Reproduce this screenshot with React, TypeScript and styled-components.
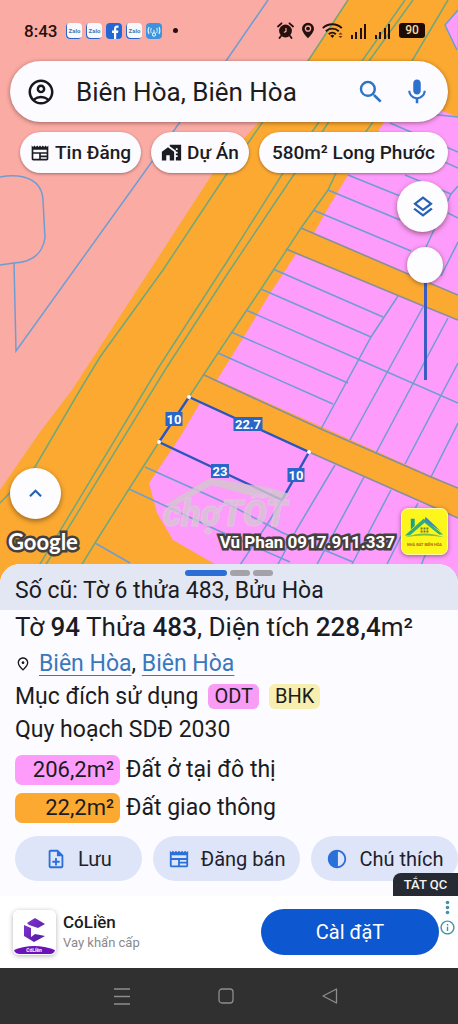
import React from "react";
import styled, { createGlobalStyle } from "styled-components";
import {
  MdContrast,
  MdHomeWork,
  MdInfoOutline,
  MdKeyboardArrowUp,
  MdMic,
  MdOutlineAccountCircle,
  MdOutlineLayers,
  MdOutlineNewspaper,
  MdOutlineNoteAdd,
  MdOutlinePlace,
  MdSearch,
} from "react-icons/md";

const GlobalStyle = createGlobalStyle`
  *, *::before, *::after { box-sizing: border-box; }
  body { margin: 0; font-family: Roboto, "Noto Sans", sans-serif; color: #1b1c22; background: #fcfbff; }
  button, input { font: inherit; color: inherit; border: 0; background: none; margin: 0; padding: 0; }
  button { cursor: pointer; }
  svg { display: block; flex: none; }
`;

const Page = styled.div`
  display: flex;
  flex-direction: column;
  min-height: 100vh;
  overflow: hidden;
`;

/* ---------- Map ---------- */

const MapArea = styled.section`
  position: relative;
  isolation: isolate;
  flex: 1;
  display: flex;
  flex-direction: column;
  background: #fba930;
`;

const MapCanvas = styled.svg`
  position: absolute;
  inset: 0;
  width: 100%;
  height: 100%;
  z-index: -1;
`;

const StatusBar = styled.header`
  display: flex;
  align-items: center;
  justify-content: space-between;
  height: 61px;
  padding: 0 33px 0 24px;
  font-size: 17px;
  font-weight: 500;
  color: #26100d;
`;

const StatusGroup = styled.div<{ $gap: number }>`
  display: flex;
  align-items: center;
  gap: ${(p) => p.$gap}px;
`;

const Clock = styled.time`
  margin-right: 5px;
`;

const AppBadge = styled.span<{ $bg: string; $fg: string }>`
  display: grid;
  place-items: center;
  width: 16px;
  height: 16px;
  border-radius: 4px;
  background: ${(p) => p.$bg};
  color: ${(p) => p.$fg};
  font-size: 6px;
  font-weight: 700;
  overflow: hidden;
`;

const ZaloBadge = styled(AppBadge)`
  box-shadow: inset 1px -1px 0 0 #2f62c4;
`;

const MoreDot = styled.span`
  width: 5px;
  height: 5px;
  margin-left: 7px;
  border-radius: 50%;
  background: #26100d;
`;

const Battery = styled.span`
  width: 26px;
  margin-left: 1px;
  border-radius: 3px;
  background: #1d0b04;
  color: #fdd9a0;
  font-size: 12px;
  line-height: 15px;
  text-align: center;
`;

const SearchBar = styled.form`
  display: flex;
  align-items: center;
  height: 61px;
  margin: 0 10px;
  padding: 0 16px;
  border-radius: 31px;
  background: #fcfbff;
  box-shadow: 0 1px 4px rgba(60, 30, 20, 0.5);
`;

const SearchInput = styled.input`
  flex: 1;
  min-width: 0;
  margin: 0 20px 0 20px;
  font-size: 26px;
  outline: none;
`;

const IconButton = styled.button<{ $color: string; $left?: number }>`
  color: ${(p) => p.$color};
  margin-left: ${(p) => p.$left ?? 0}px;
`;

const Chips = styled.nav`
  display: flex;
  gap: 10px;
  padding: 10px 10px 4px 20px;
  overflow: hidden;
`;

const Chip = styled.button<{ $grow?: boolean }>`
  display: flex;
  align-items: center;
  justify-content: center;
  flex: ${(p) => (p.$grow ? "1 0 auto" : "none")};
  gap: 5px;
  height: 41px;
  padding: 0 10px;
  border-radius: 21px;
  background: #fcfbff;
  box-shadow: 0 1px 3px rgba(60, 30, 20, 0.45);
  font-size: 19px;
  font-weight: 500;
  white-space: nowrap;
`;

const MapControls = styled.div`
  display: flex;
  flex-direction: column;
  align-items: flex-end;
  gap: 15px;
  padding: 4px 10px 0;
`;

const RoundButton = styled.button`
  display: grid;
  place-items: center;
  width: 51px;
  height: 51px;
  border-radius: 50%;
  background: #fdfcff;
  color: #2461b5;
  box-shadow: 0 2px 5px rgba(60, 30, 20, 0.5);
`;

const OpacitySlider = styled.input`
  appearance: none;
  writing-mode: vertical-lr;
  direction: rtl;
  width: 36px;
  height: 133px;
  margin-right: 5px;
  background: linear-gradient(#3a5cc0, #3a5cc0) center / 3px 100% no-repeat;

  &::-webkit-slider-thumb {
    appearance: none;
    width: 36px;
    height: 36px;
    border-radius: 50%;
    background: #fdfcff;
    box-shadow: 0 1px 4px rgba(60, 30, 20, 0.5);
  }
`;

const MapFooter = styled.div`
  display: flex;
  align-items: flex-end;
  justify-content: space-between;
  margin-top: auto;
  padding: 0 10px 29px 8px;
`;

const MapFooterLeft = styled.div`
  display: flex;
  flex-direction: column;
  gap: 10px;
`;

const MapFooterRight = styled.div`
  display: flex;
  align-items: flex-end;
  gap: 6px;
`;

const Outlined = styled.span<{ $size: number }>`
  font-size: ${(p) => p.$size}px;
  font-weight: 700;
  line-height: 26px;
  color: #fff;
  -webkit-text-stroke: 5px #454040;
  paint-order: stroke fill;
  white-space: nowrap;
`;

const MapBrand = styled(Outlined)`
  font-family: Lato, Roboto, sans-serif;
`;

const ExpandButton = styled(RoundButton)`
  margin-left: 2px;
`;

const AgencyLogo = styled.svg`
  width: 47px;
  height: 47px;
  border-radius: 7px;
  background: #fdf61c;
  border: 1px solid #fdf8b0;
  box-shadow: 0 1px 4px rgba(60, 30, 20, 0.5);
`;

/* ---------- Parcel sheet ---------- */

const Sheet = styled.main`
  position: relative;
  margin-top: -20px;
  border-radius: 20px 20px 0 0;
  background: #fcfbff;
  overflow: hidden;
`;

const SheetHead = styled.div`
  height: 46px;
  padding: 6px 15px 0;
  background: #e3e7f3;
`;

const PageMarks = styled.div`
  display: flex;
  justify-content: center;
  gap: 3px;
  height: 6px;
`;

const PageMark = styled.span<{ $active?: boolean }>`
  width: ${(p) => (p.$active ? 42 : 20)}px;
  border-radius: 4px;
  background: ${(p) => (p.$active ? "#2b6fd6" : "#a3a2a9")};
`;

const Line = styled.p`
  display: flex;
  align-items: center;
  margin: 0;
  height: 33px;
  font-size: 23px;
  line-height: 28px;
  white-space: pre;
`;

const OldNumber = styled(Line)`
  height: 30px;
`;

const SheetBody = styled.div`
  padding: 0 15px;
`;

const Title = styled.h1`
  margin: 0;
  padding-bottom: 2px;
  font-size: 26px;
  font-weight: 400;
  line-height: 35px;
  white-space: nowrap;

  b {
    font-weight: 500;
  }
`;

const Place = styled(Line)`
  gap: 8px;

  a {
    color: #3a78bd;
    text-decoration-thickness: 1px;
    text-underline-offset: 4px;
  }
`;

const Tag = styled.span<{ $bg: string }>`
  margin-left: 10px;
  padding: 0 6px;
  border-radius: 6px;
  background: ${(p) => p.$bg};
  font-size: 20px;
  line-height: 25px;
`;

const LandUses = styled.ul`
  display: grid;
  gap: 8px;
  margin: 9px 0 0;
  padding: 0;
  list-style: none;
`;

const LandUse = styled.li`
  display: flex;
  align-items: center;
  gap: 6px;
  font-size: 23px;
  line-height: 30px;
`;

const Area = styled.span<{ $bg: string }>`
  width: 105px;
  padding-right: 6px;
  border-radius: 7px;
  background: ${(p) => p.$bg};
  font-size: 22px;
  text-align: right;
`;

const Actions = styled.div`
  display: flex;
  gap: 11px;
  margin-right: -40px;
  padding: 13px 0 15px;
`;

const Action = styled.button<{ $pad: number }>`
  display: flex;
  align-items: center;
  justify-content: center;
  flex: none;
  gap: 11px;
  height: 45px;
  padding: 0 ${(p) => p.$pad}px;
  border-radius: 23px;
  background: #dfe5f8;
  color: #1c222c;
  font-size: 20px;
  white-space: nowrap;

  svg {
    color: #2b70d9;
  }
`;

const AdToggle = styled.button`
  position: absolute;
  right: 0;
  bottom: 0;
  width: 65px;
  height: 23px;
  border-radius: 8px 0 0 0;
  background: #252a33;
  color: #f3f3f5;
  font-size: 13px;
  font-weight: 500;
`;

/* ---------- Ad and system bar ---------- */

const Ad = styled.aside`
  display: flex;
  align-items: center;
  height: 72px;
  padding: 0 2px 0 13px;
  background: #fff;
`;

const AdIcon = styled.svg`
  width: 43px;
  height: 45px;
  border-radius: 6px;
  box-shadow: 0 1px 5px rgba(0, 0, 0, 0.3);
`;

const AdText = styled.div`
  flex: 1;
  margin-left: 7px;
`;

const AdName = styled.div`
  font-size: 17px;
  font-weight: 500;
  line-height: 22px;
`;

const AdNote = styled.div`
  color: #8a8a8e;
  font-size: 13px;
  line-height: 20px;
`;

const AdButton = styled.button`
  width: 178px;
  height: 46px;
  border-radius: 23px;
  background: #0d57d0;
  color: #fff;
  font-size: 20px;
`;

const AdOptions = styled.div`
  display: flex;
  flex-direction: column;
  align-items: center;
  align-self: flex-start;
  gap: 4px;
  padding-top: 4px;
  color: #3f93a5;
`;

const SystemBar = styled.footer`
  display: flex;
  justify-content: center;
  align-items: center;
  gap: 80px;
  height: 56px;
  padding-right: 6px;
  background: #303030;

  button {
    display: grid;
    place-items: center;
    width: 24px;
    height: 24px;
  }
`;

/* ---------- Map data ---------- */

const mainRoadLines = [
  "348,0 308,61 262,123 228,172 163,270 100,357 80,390 35,467 0,503",
  "405,0 362,61 283,173 228,260 157,370 28,584",
  "413,0 369,61 295,173 228,273 165,370 34,584",
  "448,0 412,61 378,115 336,173 328,190 301,228 261,289 218,353 189,397 159,442 129,489 95,543 70,584",
];

const parcelLines = [
  "14,263 16,351 146,170 180,122 226,61 268,0",
  "458,10 445,25 457,50",
  "391,110 458,117",
  "390,123 458,152",
  "377,132 458,168",
  "348,175 400,196",
  "405,175 451,194 458,186",
  "328,190 400,220",
  "313,210 411,251",
  "451,194 426,247",
  "448,213 458,218",
  "458,242 441,276",
  "273,269 383,317",
  "261,289 371,337",
  "246,310 360,360 458,403",
  "231,332 348,383",
  "218,353 333,404",
  "398,296 371,337 321,429",
  "423,307 350,440",
  "448,318 376,453",
  "458,363 405,464",
  "458,423 431,477",
  "145,467 230,505 283,533 353,562",
  "129,489 217,530 290,562",
  "95,543 130,563",
  "282,500 268,523 238,568",
  "335,465 298,527 276,568",
  "364,477 315,568",
  "391,490 350,568",
  "418,503 385,568",
  "442,513 420,568",
];

const roadEdges = [
  "301,228 408,274 458,295",
  "286,249 421,305 458,320",
  "204,375 321,429 431,477 458,488",
  "189,397 309,452 458,518",
];

const corners = [
  [189, 397],
  [309, 452],
  [159, 442],
];

const edgeLabels = [
  { x: 174, y: 419, w: 17, text: "10" },
  { x: 248, y: 424, w: 29, text: "22.7" },
  { x: 220, y: 471, w: 18, text: "23" },
  { x: 296, y: 475, w: 17, text: "10" },
];

function ParcelMap() {
  return (
    <MapCanvas viewBox="0 0 458 584" preserveAspectRatio="xMidYMin slice" aria-hidden="true">
      <rect width="458" height="584" fill="#fba930" />
      <polygon points="0,0 347,0 307,61 258,123 213,173 150,270 72,390 40,432 0,490" fill="#faaba4" />
      <g fill="#fd9cfb">
        <polygon points="458,10 445,25 457,50" />
        <polygon points="391,110 440,110 458,117 458,295 314,233 328,208 348,175 381,127" />
        <polygon points="296,254 458,320 458,488 217,380 248,330 271,292" />
        <polygon points="200,403 309,452 458,518 458,584 250,584 213,563 173,540 157,513 149,483 180,437" />
      </g>
      <g fill="none" stroke="#6fa77f" strokeWidth="1.5">
        {mainRoadLines.map((points) => (
          <polyline key={points} points={points} />
        ))}
      </g>
      <g fill="none" stroke="#6e9dd4" strokeWidth="1.5">
        <path d="M0 177Q10 175 18 176Q42 179 43 200L45 238Q41 262 14 263L0 265" />
        {parcelLines.map((points) => (
          <polyline key={points} points={points} />
        ))}
      </g>
      <g fill="none" stroke="#8a8f9c" strokeWidth="1.6">
        {roadEdges.map((points) => (
          <polyline key={points} points={points} />
        ))}
      </g>
      <polygon points="189,397 309,452 282,500 159,442" fill="none" stroke="#2a56bd" strokeWidth="2.4" />
      {corners.map(([x, y]) => (
        <circle key={x} cx={x} cy={y} r="2" fill="#fff" />
      ))}
      <g fill="#d3c8cf" opacity="0.8">
        <path d="M165 505 L210 478 L270 488 L290 494 L284 501 L248 495 L212 485 L176 505Z" />
        <text x="163" y="526" fontSize="36" fontWeight="900" fontStyle="italic" stroke="#e6c6e8" strokeWidth="1">
          chợTỐT
        </text>
      </g>
      {edgeLabels.map(({ x, y, w, text }) => (
        <g key={`${x}-${y}`}>
          <rect x={x - w / 2} y={y - 7} width={w} height="14" fill="#2a66c8" />
          <text x={x} y={y + 5} fill="#fff" fontSize="13" fontWeight="700" textAnchor="middle">
            {text}
          </text>
        </g>
      ))}
    </MapCanvas>
  );
}

const AlarmIcon = () => (
  <svg width="17" height="17" viewBox="0 0 17 17">
    <circle cx="8.500" cy="9" r="6.400" fill="#26100d" />
    <path d="M1 4.500 4.500 1.300M16 4.500 12.500 1.300M4 14l-1.500 2M13 14l1.500 2" stroke="#26100d" strokeWidth="1.800" strokeLinecap="round" />
    <path d="M9 6v3.300L7 10.500" fill="none" stroke="#faaba4" strokeWidth="1.200" />
  </svg>
);

const PinIcon = () => (
  <svg width="14" height="17" viewBox="0 0 14 17">
    <path d="M7 .8a6 6 0 0 0-6 6C1 10.500 7 16.300 7 16.300s6-5.800 6-9.500a6 6 0 0 0-6-6Z" fill="#26100d" />
    <circle cx="7" cy="6.600" r="2.600" fill="none" stroke="#faaba4" strokeWidth="1.300" />
  </svg>
);

const WifiIcon = () => (
  <svg width="21" height="16" viewBox="0 0 21 16" fill="none" stroke="#26100d" strokeWidth="1.900">
    <path d="M.8 5.200a13.500 13.500 0 0 1 19 0M3.800 8.300a9.300 9.300 0 0 1 13 0M6.800 11.200a5 5 0 0 1 7 0" />
    <path d="m8.300 12.700 2 2.300 2-2.300a3 3 0 0 0-4 0Z" fill="#26100d" stroke="none" />
    <path d="m16.500 11.500 2-2 2 2ZM16.500 13l2 2 2-2Z" fill="#6b2c14" stroke="none" />
  </svg>
);

const SignalIcon = () => (
  <svg width="17" height="16" viewBox="0 0 17 16" stroke="#26100d" strokeWidth="2">
    <path d="M2 16v-4M6 16V9M11 16V5M15 16V1" />
  </svg>
);

export default function App() {
  return (
    <>
      <GlobalStyle />
      <Page>
        <MapArea>
          <ParcelMap />
          <StatusBar>
            <StatusGroup $gap={4}>
              <Clock>8:43</Clock>
              <ZaloBadge $bg="#f7fafc" $fg="#3c7fb8">Zalo</ZaloBadge>
              <ZaloBadge $bg="#f7fafc" $fg="#3c7fb8">Zalo</ZaloBadge>
              <AppBadge $bg="#2467d4" $fg="#fff">
                <svg width="16" height="16" viewBox="0 0 16 16">
                  <path d="M8 16v-6H6V7.500h2V6c0-2.300 1.200-3.400 3.200-3.400h1.300v2.200h-1.200c-.8 0-1.100.4-1.100 1.200v1.500h2.200L12 10h-1.800v6Z" fill="#fff" />
                </svg>
              </AppBadge>
              <ZaloBadge $bg="#f7fafc" $fg="#3c7fb8">Zalo</ZaloBadge>
              <AppBadge $bg="#3d93dc" $fg="#fff">
                <svg width="16" height="16" viewBox="0 0 16 16" fill="none" stroke="#d9f1ff" strokeWidth="1.100">
                  <path d="M3 4q-1.800 3.500 0 7M5.300 5q-1.200 2.500 0 5M13 4q1.800 3.500 0 7M10.700 5q1.200 2.500 0 5M8 7v3" />
                  <circle cx="8" cy="11.500" r="1.600" />
                </svg>
              </AppBadge>
              <MoreDot />
            </StatusGroup>
            <StatusGroup $gap={7}>
              <AlarmIcon />
              <PinIcon />
              <WifiIcon />
              <SignalIcon />
              <SignalIcon />
              <Battery>90</Battery>
            </StatusGroup>
          </StatusBar>

          <SearchBar role="search">
            <IconButton type="button" $color="#17181c" aria-label="Tài khoản">
              <MdOutlineAccountCircle size={30} />
            </IconButton>
            <SearchInput aria-label="Tìm kiếm" defaultValue="Biên Hòa, Biên Hòa" />
            <IconButton type="submit" $color="#2c74c4" aria-label="Tìm">
              <MdSearch size={30} />
            </IconButton>
            <IconButton type="button" $color="#2c70d0" $left={16} aria-label="Giọng nói">
              <MdMic size={30} />
            </IconButton>
          </SearchBar>

          <Chips>
            <Chip>
              <MdOutlineNewspaper size={20} />
              Tin Đăng
            </Chip>
            <Chip>
              <MdHomeWork size={21} />
              Dự Án
            </Chip>
            <Chip $grow>580m² Long Phước</Chip>
          </Chips>

          <MapControls>
            <RoundButton aria-label="Lớp bản đồ">
              <MdOutlineLayers size={26} />
            </RoundButton>
            <OpacitySlider type="range" min="0" max="100" defaultValue="100" aria-label="Độ mờ" />
          </MapControls>

          <MapFooter>
            <MapFooterLeft>
              <ExpandButton aria-label="Mở rộng">
                <MdKeyboardArrowUp size={25} />
              </ExpandButton>
              <MapBrand $size={22}>Google</MapBrand>
            </MapFooterLeft>
            <MapFooterRight>
              <Outlined $size={17}>Vũ Phan 0917.911.337</Outlined>
              <AgencyLogo viewBox="0 0 46 46">
                <path d="M9 21V10h4v7Z" fill="#19a089" />
                <path d="M3 27 22 10l20 16h-4L23 14 8 27Z" fill="#2fae7b" />
                <path d="m24 8 16 15-17-11Z" fill="#3b87c0" />
                <path d="M3 29q20-8 40 0-20-4-40 0Z" fill="#7cc04a" />
                <path d="M19 19h2v2h-2zM22 19h2v2h-2zM25 19h2v2h-2zM19 22h2v2h-2zM22 22h2v2h-2zM25 22h2v2h-2z" fill="#6f7a1e" />
                <text x="23" y="38" textAnchor="middle" fontSize="4" fontWeight="700" fill="#b0641a">
                  NHÀ ĐẤT BIÊN HÒA
                </text>
              </AgencyLogo>
            </MapFooterRight>
          </MapFooter>
        </MapArea>

        <Sheet>
          <SheetHead>
            <PageMarks>
              <PageMark $active />
              <PageMark />
              <PageMark />
            </PageMarks>
            <OldNumber>Số cũ: Tờ 6 thửa 483, Bửu Hòa</OldNumber>
          </SheetHead>
          <SheetBody>
            <Title>
              Tờ <b>94</b> Thửa <b>483</b>, Diện tích <b>228,4</b>m²
            </Title>
            <Place>
              <MdOutlinePlace size={16} />
              <span>
                <a href="#ward">Biên Hòa</a>, <a href="#city">Biên Hòa</a>
              </span>
            </Place>
            <Line>
              Mục đích sử dụng
              <Tag $bg="#f99cf5">ODT</Tag>
              <Tag $bg="#f7efb0">BHK</Tag>
            </Line>
            <Line>Quy hoạch SDĐ 2030</Line>
            <LandUses>
              <LandUse>
                <Area $bg="#fd9cfb">206,2m²</Area>
                Đất ở tại đô thị
              </LandUse>
              <LandUse>
                <Area $bg="#fba930">22,2m²</Area>
                Đất giao thông
              </LandUse>
            </LandUses>
            <Actions>
              <Action $pad={30}>
                <MdOutlineNoteAdd size={22} />
                Lưu
              </Action>
              <Action $pad={15}>
                <MdOutlineNewspaper size={22} />
                Đăng bán
              </Action>
              <Action $pad={15}>
                <MdContrast size={22} />
                Chú thích
              </Action>
            </Actions>
          </SheetBody>
          <AdToggle>TẮT QC</AdToggle>
        </Sheet>

        <Ad>
          <AdIcon viewBox="0 0 43 45">
            <defs>
              <linearGradient id="violet" x1="0" y1="0" x2="1" y2="1">
                <stop offset="0" stopColor="#8a35d8" />
                <stop offset="1" stopColor="#4a1a9c" />
              </linearGradient>
            </defs>
            <rect width="43" height="45" fill="#fff" />
            <path d="M14 13 22 8l10 6-7 4-9-3ZM11 15l7 3v9l4-3 10 2-11 6-10-6Z" fill="url(#violet)" />
            <path d="M1 40q20-8 41 0-1 4-5 4H7q-5 0-6-4Z" fill="#6a14b8" />
            <text x="21" y="42" textAnchor="middle" fontSize="5" fontWeight="700" fill="#fff">
              CóLiền
            </text>
          </AdIcon>
          <AdText>
            <AdName>CóLiền</AdName>
            <AdNote>Vay khẩn cấp</AdNote>
          </AdText>
          <AdButton>Càl đặT</AdButton>
          <AdOptions>
            <svg width="5" height="15" viewBox="0 0 5 15" fill="currentColor">
              <circle cx="2.500" cy="2.500" r="1.800" />
              <circle cx="2.500" cy="7.500" r="1.800" />
              <circle cx="2.500" cy="12.500" r="1.800" />
            </svg>
            <MdInfoOutline size={17} />
          </AdOptions>
        </Ad>

        <SystemBar>
          <button aria-label="Ứng dụng gần đây">
            <svg width="16" height="17" viewBox="0 0 16 17" stroke="#8d8d8d" strokeWidth="1.300">
              <path d="M0 1h16M0 8.500h16M0 16h16" />
            </svg>
          </button>
          <button aria-label="Trang chủ">
            <svg width="16" height="16" viewBox="0 0 16 16" fill="none" stroke="#8d8d8d" strokeWidth="1.300">
              <rect x="1" y="1" width="14" height="14" rx="3" />
            </svg>
          </button>
          <button aria-label="Quay lại">
            <svg width="16" height="16" viewBox="0 0 16 16" fill="none" stroke="#8d8d8d" strokeWidth="1.300" strokeLinejoin="round">
              <path d="M14.500 1v14L1 8Z" />
            </svg>
          </button>
        </SystemBar>
      </Page>
    </>
  );
}
